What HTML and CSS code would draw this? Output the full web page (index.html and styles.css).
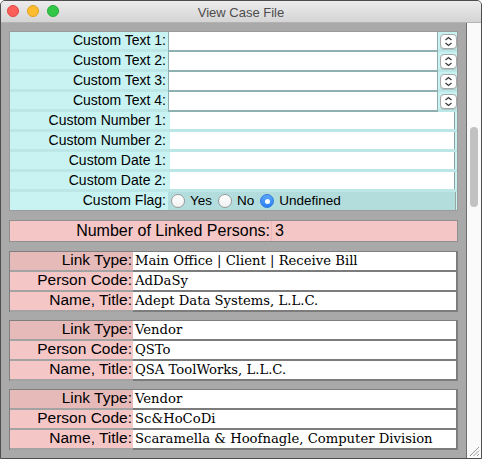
FILE: index.html
```html
<!DOCTYPE html>
<html>
<head>
<meta charset="utf-8">
<title>View Case File</title>
<link rel="stylesheet" href="styles.css">
</head>
<body>
<div class="window">
  <div class="titlebar">
    <div class="lights">
      <span class="light red"></span>
      <span class="light yellow"></span>
      <span class="light green"></span>
    </div>
    <div class="title">View Case File</div>
  </div>
  <div class="main">
    <div class="content">
      <div class="custom">
        <div class="row trow"><div class="lbl">Custom Text 1:</div><div class="tf"></div><div class="stepper"><svg width="15" height="13" viewBox="0 0 15 13"><polyline points="4.5,5 7.5,2.5 10.5,5" /><polyline points="4.5,8 7.5,10.5 10.5,8" /></svg></div></div>
        <div class="row trow"><div class="lbl">Custom Text 2:</div><div class="tf"></div><div class="stepper"><svg width="15" height="13" viewBox="0 0 15 13"><polyline points="4.5,5 7.5,2.5 10.5,5" /><polyline points="4.5,8 7.5,10.5 10.5,8" /></svg></div></div>
        <div class="row trow"><div class="lbl">Custom Text 3:</div><div class="tf"></div><div class="stepper"><svg width="15" height="13" viewBox="0 0 15 13"><polyline points="4.5,5 7.5,2.5 10.5,5" /><polyline points="4.5,8 7.5,10.5 10.5,8" /></svg></div></div>
        <div class="row trow"><div class="lbl">Custom Text 4:</div><div class="tf"></div><div class="stepper"><svg width="15" height="13" viewBox="0 0 15 13"><polyline points="4.5,5 7.5,2.5 10.5,5" /><polyline points="4.5,8 7.5,10.5 10.5,8" /></svg></div></div>
        <div class="row nrow"><div class="lbl">Custom Number 1:</div><div class="nf"></div></div>
        <div class="row nrow"><div class="lbl">Custom Number 2:</div><div class="nf"></div></div>
        <div class="row nrow"><div class="lbl">Custom Date 1:</div><div class="nf"></div></div>
        <div class="row nrow"><div class="lbl">Custom Date 2:</div><div class="nf"></div></div>
        <div class="row frow">
          <div class="lbl">Custom Flag:</div>
          <div class="radios">
            <span class="radio"></span><span class="rtext">Yes</span>
            <span class="radio"></span><span class="rtext">No</span>
            <span class="radio on"></span><span class="rtext">Undefined</span>
          </div>
        </div>
      </div>

      <div class="count">
        <div class="clbl">Number of Linked Persons:</div>
        <div class="cval">3</div>
      </div>

      <div class="person">
        <div class="plbl first">Link Type:</div><div class="pval">Main Office | Client | Receive Bill</div>
        <div class="plbl">Person Code:</div><div class="pval">AdDaSy</div>
        <div class="plbl">Name, Title:</div><div class="pval">Adept Data Systems, L.L.C.</div>
      </div>

      <div class="person">
        <div class="plbl first">Link Type:</div><div class="pval">Vendor</div>
        <div class="plbl">Person Code:</div><div class="pval">QSTo</div>
        <div class="plbl">Name, Title:</div><div class="pval">QSA ToolWorks, L.L.C.</div>
      </div>

      <div class="person">
        <div class="plbl first">Link Type:</div><div class="pval">Vendor</div>
        <div class="plbl">Person Code:</div><div class="pval">Sc&amp;HoCoDi</div>
        <div class="plbl">Name, Title:</div><div class="pval">Scaramella &amp; Hoofnagle, Computer Division</div>
      </div>
    </div>
    <div class="scrollbar">
      <div class="thumb"></div>
      <svg class="grip" width="12" height="12" viewBox="0 0 12 12">
        <line x1="11" y1="2" x2="2" y2="11" />
        <line x1="11" y1="5.5" x2="5.5" y2="11" />
        <line x1="11" y1="9" x2="9" y2="11" />
      </svg>
    </div>
  </div>
</div>
</body>
</html>
```

FILE: styles.css
```css
* {
  box-sizing: border-box;
  margin: 0;
  padding: 0;
}

html, body {
  width: 482px;
  height: 459px;
  overflow: hidden;
  background: #ffffff;
}

body {
  font-family: "Liberation Sans", Arial, sans-serif;
  color: #000;
}

.window {
  width: 482px;
  height: 459px;
  border: 1px solid #4d4d4d;
  border-radius: 5px 5px 0 0;
  display: flex;
  flex-direction: column;
  overflow: hidden;
  background: #a9a9a9;
}

.titlebar {
  flex: none;
  height: 22px;
  background: linear-gradient(#ececec, #d4d4d4);
  border-bottom: 1px solid #b3b3b3;
  position: relative;
  display: flex;
  align-items: center;
}

.lights {
  display: flex;
  gap: 8px;
  padding-left: 6px;
  margin-top: -1px;
}

.light {
  width: 12px;
  height: 12px;
  border-radius: 50%;
  display: block;
}

.red { background: #fc5f57; border: 1px solid #df4744; }
.yellow { background: #fdbc2e; border: 1px solid #dea123; }
.green { background: #33c748; border: 1px solid #27aa35; }

.title {
  position: absolute;
  left: 0;
  right: 0;
  top: 4px;
  text-align: center;
  font-size: 13px;
  line-height: 16px;
  color: #4d4d4d;
}

.main {
  flex: 1;
  display: flex;
  min-height: 0;
}

.content {
  flex: 1;
  padding: 8px 8px 0 8px;
  background: #a9a9a9;
  overflow: hidden;
}

/* custom fields panel */
.custom {
  width: 449px;
  border: 1px solid #9b9b9b;
  background: #c9f3f3;
}

.row {
  display: grid;
  height: 20px;
  background: linear-gradient(to bottom, #c9f3f3 17px, #bde6e6 17px);
}

.trow {
  grid-template-columns: 158px 270px 2px 17px;
}

.nrow {
  grid-template-columns: 158px 2px 285px;
}

.lbl {
  text-align: right;
  padding-right: 2px;
  font-size: 14px;
  line-height: 16px;
  white-space: nowrap;
}

.tf {
  background: #fff;
  border-left: 1px solid #8fb0b0;
  border-right: 1px solid #8fb0b0;
  border-bottom: 2px solid #8fb0b0;
  height: 20px;
}

.stepper {
  grid-column: 4;
  margin-top: 2px;
  height: 15px;
  width: 17px;
  background: #fff;
  border: 1px solid #a6a6a6;
  border-radius: 4px;
  box-shadow: 0 1px 0 rgba(0, 0, 0, 0.12);
  display: flex;
  align-items: center;
  justify-content: center;
}

.stepper svg polyline {
  fill: none;
  stroke: #3c3c3c;
  stroke-width: 1.3;
}

.nf {
  grid-column: 3;
  background: #fff;
  height: 17px;
  border-right: 1px solid #8e9e9e;
}

.frow {
  grid-template-columns: 158px 288px;
  height: 18px;
  background: #c9f3f3;
}

.radios {
  background: #b3dddd;
  display: flex;
  align-items: center;
  padding-left: 3px;
  font-size: 13.5px;
  border-right: 1px solid #96a8a8;
}

.radio {
  width: 14px;
  height: 14px;
  border-radius: 50%;
  border: 1px solid #9a9a9a;
  background: linear-gradient(#ffffff, #f1f1f1);
  display: flex;
  align-items: center;
  justify-content: center;
  flex: none;
}

.radio.on {
  background: linear-gradient(#5da6fb, #2a80f3);
  border-color: #2d7ae2;
}

.radio.on::after {
  content: "";
  width: 5px;
  height: 5px;
  border-radius: 50%;
  background: #fff;
}

.rtext {
  margin-left: 5px;
  margin-right: 6px;
  line-height: 16px;
}

/* count header */
.count {
  margin-top: 9px;
  width: 449px;
  height: 22px;
  border: 1px solid #8f8f8f;
  background: #f4c6c6;
  display: grid;
  grid-template-columns: 261px 1fr;
  font-size: 16px;
  line-height: 20px;
}

.clbl {
  text-align: right;
  padding-right: 1px;
  white-space: nowrap;
}

.cval {
  border-left: 1px solid #e9b8b8;
  padding-left: 3px;
}

/* linked persons */
.person {
  margin-top: 9px;
  width: 449px;
  border: 1px solid #7f7f7f;
  border-bottom: none;
  display: grid;
  grid-template-columns: 123px 1fr;
  background: #a9a9a9;
}

.person + .person {
  margin-top: 8px;
}

.plbl {
  height: 20px;
  background: #f4c6c6;
  border-bottom: 2px solid #a3a3a3;
  text-align: right;
  padding-right: 1px;
  font-size: 15.5px;
  line-height: 16px;
  white-space: nowrap;
}

.plbl.first {
  background: #e7baba;
}

.pval {
  height: 20px;
  background: #fff;
  border-bottom: 2px solid #7c7c7c;
  border-right: 1px solid #7c7c7c;
  padding-left: 2px;
  font-family: "DejaVu Serif", serif;
  font-size: 13.2px;
  line-height: 17px;
  white-space: nowrap;
  overflow: hidden;
}

/* scrollbar */
.scrollbar {
  flex: none;
  width: 15px;
  border-left: 1px solid #6e6e6e;
  background: #fafafa;
  position: relative;
  padding-top: 104px;
  padding-left: 3px;
}

.thumb {
  width: 8px;
  height: 80px;
  border-radius: 4px;
  background: #c2c2c2;
}

.grip {
  position: absolute;
  right: 1px;
  bottom: 1px;
}

.grip line {
  stroke: #9a9a9a;
  stroke-width: 1;
}
```
